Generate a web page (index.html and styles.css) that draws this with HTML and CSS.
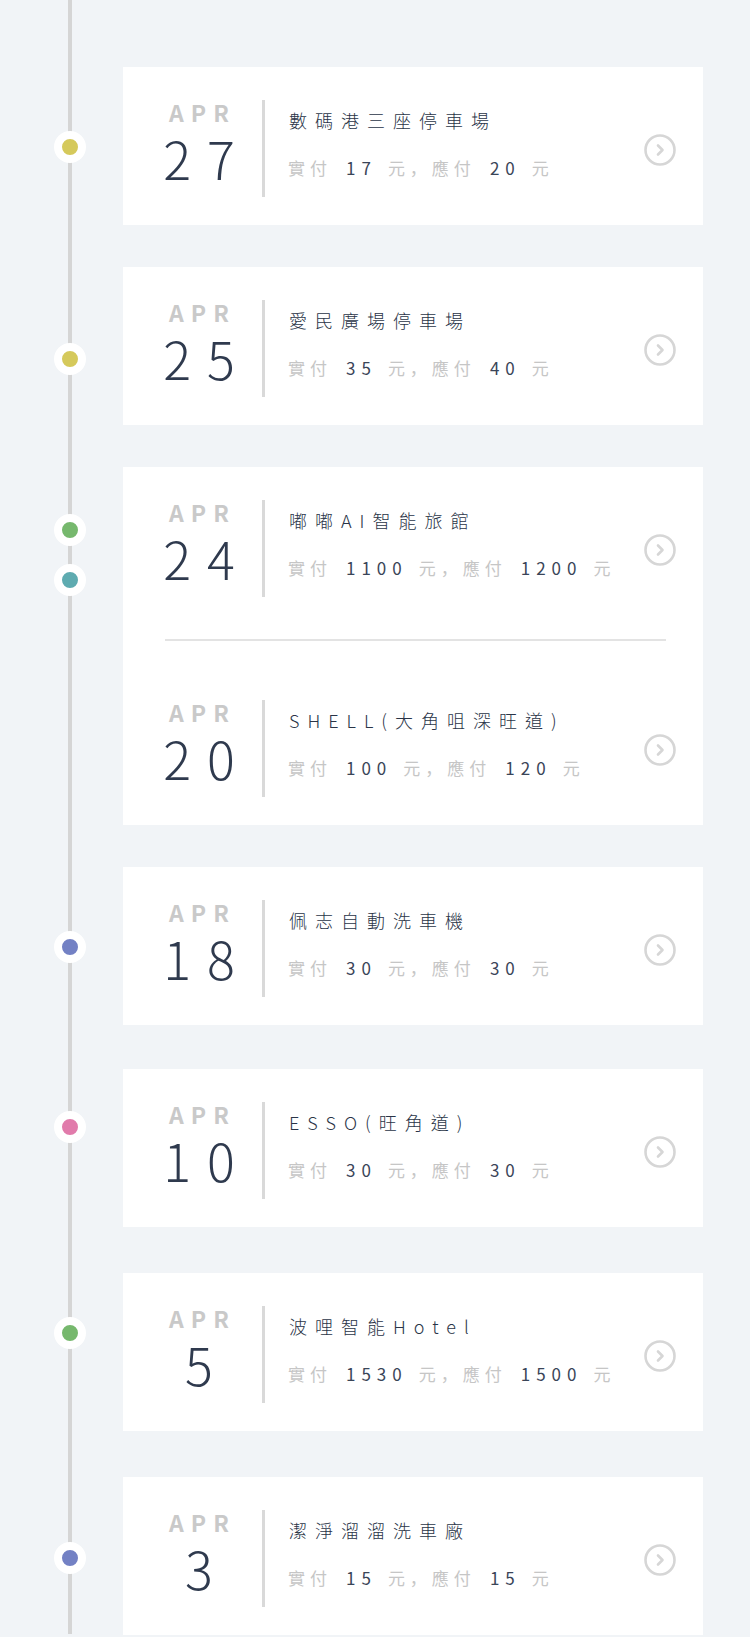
FILE: index.html
```html
<!DOCTYPE html>
<html lang="zh-Hant">
<head>
<meta charset="utf-8">
<title>Timeline</title>
<link rel="stylesheet" href="styles.css">
</head>
<body>
<main class="timeline">

  <section class="row">
    <div class="rail"><span class="dot dot--yellow" style="top:64px"></span></div>
    <div class="card">
      <div class="entry">
        <div class="date"><span class="month">APR</span><span class="day">27</span></div>
        <div class="divider"></div>
        <div class="info">
          <div class="title">數碼港三座停車場</div>
          <div class="amount"><span class="lbl">實付</span><span class="num">17</span><span class="lbl">元，應付</span><span class="num">20</span><span class="lbl">元</span></div>
        </div>
        <svg class="chev" viewBox="0 0 32 32"><circle cx="16" cy="16" r="14.5"/><path d="M14 11.5 L18.5 16 L14 20.5"/></svg>
      </div>
    </div>
  </section>

  <section class="row">
    <div class="rail"><span class="dot dot--yellow" style="top:76px"></span></div>
    <div class="card">
      <div class="entry">
        <div class="date"><span class="month">APR</span><span class="day">25</span></div>
        <div class="divider"></div>
        <div class="info">
          <div class="title">愛民廣場停車場</div>
          <div class="amount"><span class="lbl">實付</span><span class="num">35</span><span class="lbl">元，應付</span><span class="num">40</span><span class="lbl">元</span></div>
        </div>
        <svg class="chev" viewBox="0 0 32 32"><circle cx="16" cy="16" r="14.5"/><path d="M14 11.5 L18.5 16 L14 20.5"/></svg>
      </div>
    </div>
  </section>

  <section class="row">
    <div class="rail">
      <span class="dot dot--green" style="top:47px"></span>
      <span class="dot dot--teal" style="top:97px"></span>
    </div>
    <div class="card">
      <div class="entry">
        <div class="date"><span class="month">APR</span><span class="day">24</span></div>
        <div class="divider"></div>
        <div class="info">
          <div class="title">嘟嘟AI智能旅館</div>
          <div class="amount"><span class="lbl">實付</span><span class="num">1100</span><span class="lbl">元，應付</span><span class="num">1200</span><span class="lbl">元</span></div>
        </div>
        <svg class="chev" viewBox="0 0 32 32"><circle cx="16" cy="16" r="14.5"/><path d="M14 11.5 L18.5 16 L14 20.5"/></svg>
      </div>
      <div class="sep"></div>
      <div class="entry">
        <div class="date"><span class="month">APR</span><span class="day">20</span></div>
        <div class="divider"></div>
        <div class="info">
          <div class="title">SHELL(大角咀深旺道)</div>
          <div class="amount"><span class="lbl">實付</span><span class="num">100</span><span class="lbl">元，應付</span><span class="num">120</span><span class="lbl">元</span></div>
        </div>
        <svg class="chev" viewBox="0 0 32 32"><circle cx="16" cy="16" r="14.5"/><path d="M14 11.5 L18.5 16 L14 20.5"/></svg>
      </div>
    </div>
  </section>

  <section class="row">
    <div class="rail"><span class="dot dot--blue" style="top:64px"></span></div>
    <div class="card">
      <div class="entry">
        <div class="date"><span class="month">APR</span><span class="day">18</span></div>
        <div class="divider"></div>
        <div class="info">
          <div class="title">佩志自動洗車機</div>
          <div class="amount"><span class="lbl">實付</span><span class="num">30</span><span class="lbl">元，應付</span><span class="num">30</span><span class="lbl">元</span></div>
        </div>
        <svg class="chev" viewBox="0 0 32 32"><circle cx="16" cy="16" r="14.5"/><path d="M14 11.5 L18.5 16 L14 20.5"/></svg>
      </div>
    </div>
  </section>

  <section class="row">
    <div class="rail"><span class="dot dot--pink" style="top:42px"></span></div>
    <div class="card">
      <div class="entry">
        <div class="date"><span class="month">APR</span><span class="day">10</span></div>
        <div class="divider"></div>
        <div class="info">
          <div class="title">ESSO(旺角道)</div>
          <div class="amount"><span class="lbl">實付</span><span class="num">30</span><span class="lbl">元，應付</span><span class="num">30</span><span class="lbl">元</span></div>
        </div>
        <svg class="chev" viewBox="0 0 32 32"><circle cx="16" cy="16" r="14.5"/><path d="M14 11.5 L18.5 16 L14 20.5"/></svg>
      </div>
    </div>
  </section>

  <section class="row">
    <div class="rail"><span class="dot dot--green" style="top:44px"></span></div>
    <div class="card">
      <div class="entry">
        <div class="date"><span class="month">APR</span><span class="day">5</span></div>
        <div class="divider"></div>
        <div class="info">
          <div class="title">波哩智能Hotel</div>
          <div class="amount"><span class="lbl">實付</span><span class="num">1530</span><span class="lbl">元，應付</span><span class="num">1500</span><span class="lbl">元</span></div>
        </div>
        <svg class="chev" viewBox="0 0 32 32"><circle cx="16" cy="16" r="14.5"/><path d="M14 11.5 L18.5 16 L14 20.5"/></svg>
      </div>
    </div>
  </section>

  <section class="row">
    <div class="rail"><span class="dot dot--blue" style="top:65px"></span></div>
    <div class="card">
      <div class="entry">
        <div class="date"><span class="month">APR</span><span class="day">3</span></div>
        <div class="divider"></div>
        <div class="info">
          <div class="title">潔淨溜溜洗車廠</div>
          <div class="amount"><span class="lbl">實付</span><span class="num">15</span><span class="lbl">元，應付</span><span class="num">15</span><span class="lbl">元</span></div>
        </div>
        <svg class="chev" viewBox="0 0 32 32"><circle cx="16" cy="16" r="14.5"/><path d="M14 11.5 L18.5 16 L14 20.5"/></svg>
      </div>
    </div>
  </section>

</main>
</body>
</html>
```

FILE: styles.css
```css
html, body {
  margin: 0;
  padding: 0;
}

body {
  width: 750px;
  height: 1637px;
  overflow: hidden;
  background: #f1f4f7;
  font-family: "Noto Sans CJK TC", "Noto Sans", sans-serif;
  text-spacing-trim: space-all;
}

.timeline {
  box-sizing: border-box;
  height: 1637px;
  padding: 67px 47px 0 0;
  display: flex;
  flex-direction: column;
  gap: 42px;
  background: linear-gradient(#d5d5d5, #d5d5d5) no-repeat 68px 0 / 4px 1634px;
}

.row {
  display: grid;
  grid-template-columns: 123px 1fr;
}

.row:nth-child(5) {
  margin-top: 2px;
}

.row:nth-child(n+6) {
  margin-top: 4px;
}

.rail {
  position: relative;
}

.dot {
  position: absolute;
  left: 54px;
  width: 16px;
  height: 16px;
  border: 8px solid #fff;
  border-radius: 50%;
}

.dot--yellow { background: #d5c95b; }
.dot--green  { background: #76b86d; }
.dot--teal   { background: #5eabb0; }
.dot--blue   { background: #7381c4; }
.dot--pink   { background: #e17bab; }

.card {
  background: #fff;
}

.entry {
  display: flex;
  height: 97px;
  padding: 33px 27px 28px 36px;
}

.date {
  width: 80px;
  flex: none;
  display: flex;
  flex-direction: column;
  align-items: center;
}

.month {
  font-size: 23px;
  font-weight: 700;
  line-height: 25px;
  letter-spacing: 7px;
  padding-left: 7px;
  color: #c9c9c9;
}

.day {
  font-size: 52px;
  font-weight: 300;
  line-height: 66px;
  letter-spacing: 16px;
  padding-left: 16px;
  color: #2f3a4e;
  white-space: nowrap;
}

.divider {
  flex: none;
  width: 3px;
  margin-left: 23px;
  background: #d9d9d9;
}

.info {
  flex: 1;
  margin-left: 23px;
  min-width: 0;
}

.title {
  font-size: 18px;
  font-weight: 300;
  line-height: 40px;
  letter-spacing: 8px;
  padding-left: 1px;
  color: #2a3447;
  white-space: nowrap;
}

.amount {
  margin-top: 14px;
  font-size: 17px;
  line-height: 28px;
  white-space: nowrap;
}

.lbl {
  font-family: "Noto Sans CJK SC", "Noto Sans CJK TC", sans-serif;
  font-feature-settings: "locl" 0;
  color: #c6c6c6;
  letter-spacing: 5px;
}

.num {
  color: #3a4558;
  letter-spacing: 6px;
  margin: 0 11px 0 14px;
}

.chev {
  flex: none;
  width: 32px;
  height: 32px;
  margin-top: 34px;
  fill: none;
  stroke: #d6d6d6;
  stroke-width: 2.6;
  stroke-linecap: round;
  stroke-linejoin: round;
}

.sep {
  height: 2px;
  margin: 14px 37px 26px 42px;
  background: #e3e3e3;
}
```
